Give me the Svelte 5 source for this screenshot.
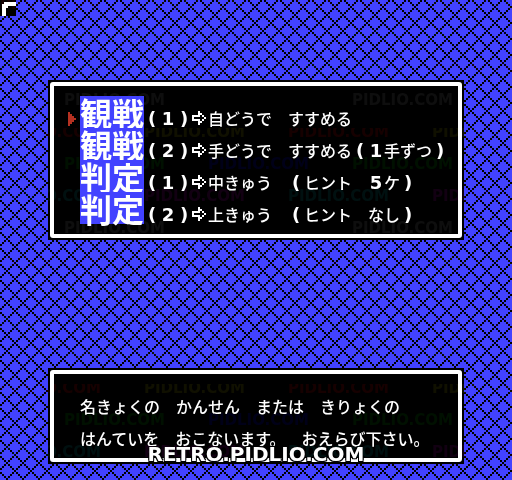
<script lang="ts">
  type Option = { mode: string; text: string };

  const options: Option[] = [
    { mode: "観戦", text: "(1)➩自どうで　すすめる" },
    { mode: "観戦", text: "(2)➩手どうで　すすめる(1手ずつ)" },
    { mode: "判定", text: "(1)➩中きゅう　(ヒント　5ケ)" },
    { mode: "判定", text: "(2)➩上きゅう　(ヒント　なし)" },
  ];

  const message = [
    "名きょくの　かんせん　または　きりょくの",
    "はんていを　おこないます。　おえらび下さい。",
  ];

  let selected = $state(0);

  // brackets, digits and the arrow are drawn one per tile
  const split = (text: string) => text.split(/([()\d➩])/).filter((part) => part !== "");
  const isTile = (part: string) => /^[()\d➩]$/.test(part);

  const steps = [0, 1, 2, 3, 4, 5, 6, 7];
</script>

<svg class="backdrop" aria-hidden="true" shape-rendering="crispEdges">
  <defs>
    <pattern id="net" width="16" height="16" patternUnits="userSpaceOnUse">
      <rect width="16" height="16" fill="#4242ff" />
      {#each steps as i}
        <rect x={i * 2} y={((i + 4) % 8) * 2} width="2" height="2" />
        <rect x={i * 2} y={((10 - i) % 8) * 2} width="2" height="2" />
      {/each}
    </pattern>
    <pattern id="marks" width="288" height="128" patternUnits="userSpaceOnUse">
      <g class="mark">
        <text x="64" y="105" fill="#0e0e0e">PIDLIO.COM</text>
        <text x="0" y="9" fill="#160000">PIDLIO.COM</text>
        <text x="144" y="9" fill="#101000">PIDLIO.COM</text>
        <text x="64" y="41" fill="#001000">PIDLIO.COM</text>
        <text x="208" y="41" fill="#000018">PIDLIO.COM</text>
        <text x="-80" y="41" fill="#000018">PIDLIO.COM</text>
        <text x="0" y="73" fill="#001010">PIDLIO.COM</text>
        <text x="144" y="73" fill="#120012">PIDLIO.COM</text>
      </g>
    </pattern>
  </defs>
  <rect width="100%" height="100%" fill="url(#net)" />
  <rect width="16" height="16" />
  <path d="M4 2H16V6H8V8H6V16H2V4H4Z" fill="#fff" />
</svg>

<main>
  <section class="panel">
    <div class="frame">
      <div class="menu">
        {#each options as option, i}
          <button class="option" class:selected={selected === i} onclick={() => (selected = i)}>
            <svg class="cursor" viewBox="0 0 8 14" shape-rendering="crispEdges" aria-hidden="true">
              <path d="M0 0H2V2H4V4H6V6H8V8H6V10H4V12H2V14H0Z" fill="#b53121" />
            </svg>
            <span class="mode">{option.mode}</span>
            <span class="text">
              {#each split(option.text) as part}<span class:tile={isTile(part)}>{#if part === "➩"}<svg class="arrow" viewBox="0 0 16 14" shape-rendering="crispEdges" aria-label="➩"><path d="M6 0H8V2H10V4H12V6H14V8H12V10H10V12H8V14H6V10H0V4H6ZM2 6V8H8V10H10V8H12V6H10V4H8V6Z" fill="#fff" fill-rule="evenodd" /></svg>{:else}{part}{/if}</span>{/each}
            </span>
          </button>
        {/each}
      </div>
    </div>
  </section>

  <section class="panel">
    <div class="frame">
      <div class="message">
        {#each message as line}
          <p>{line}</p>
        {/each}
      </div>
    </div>
    <div class="site">RETRO.PIDLIO.COM</div>
  </section>
</main>

<svg class="backdrop overlay" aria-hidden="true">
  <rect width="100%" height="100%" fill="url(#marks)" />
</svg>

<style>
  :global(body) {
    background: #4242ff;
  }

  .backdrop {
    position: absolute;
    top: 0;
    left: 0;
    width: 100%;
    height: 100%;
    z-index: -1;
  }

  .overlay {
    z-index: 1;
    pointer-events: none;
    mix-blend-mode: lighten;
  }

  .mark {
    font: bold 15px "DejaVu Sans", sans-serif;
  }

  main {
    display: flex;
    flex-direction: column;
    gap: 128px;
    padding: 80px 48px 16px;
    color: #fff;
    font-family: "Noto Sans CJK JP", sans-serif;
    font-size: 16px;
    font-weight: 500;
    text-spacing-trim: space-all;
  }

  .panel {
    position: relative;
    background: #000;
    padding: 2px;
  }

  .frame {
    border: 4px solid #fff;
    border-radius: 3px;
  }

  .menu {
    padding: 10px 0;
  }

  .option {
    display: flex;
    width: 100%;
    height: 32px;
    padding: 0 0 0 14px;
    border: 0;
    background: none;
    color: inherit;
    font: inherit;
    text-align: left;
    white-space: nowrap;
    cursor: pointer;
  }

  .cursor {
    width: 8px;
    height: 14px;
    margin: 16px 4px 0 0;
    visibility: hidden;
  }

  .selected .cursor {
    visibility: visible;
  }

  .mode {
    background: #4242ff;
    font-size: 32px;
    font-weight: bold;
    line-height: 32px;
  }

  .text {
    padding-top: 10px;
    line-height: 24px;
  }

  .tile {
    display: inline-block;
    width: 16px;
    font-family: "DejaVu Sans", sans-serif;
    font-size: 18px;
    font-weight: bold;
    line-height: 16px;
    text-align: center;
  }

  .arrow {
    display: block;
    width: 16px;
    height: 14px;
  }

  .message {
    padding: 16px 26px 4px;
  }

  .message p {
    margin: 0;
    line-height: 32px;
    white-space: nowrap;
  }

  .site {
    position: absolute;
    right: 0;
    bottom: 0;
    left: 0;
    font: bold 20px/20px "DejaVu Sans", sans-serif;
    text-align: center;
    text-shadow: 1px 1px #000, -1px -1px #000, 1px -1px #000, -1px 1px #000;
  }
</style>
